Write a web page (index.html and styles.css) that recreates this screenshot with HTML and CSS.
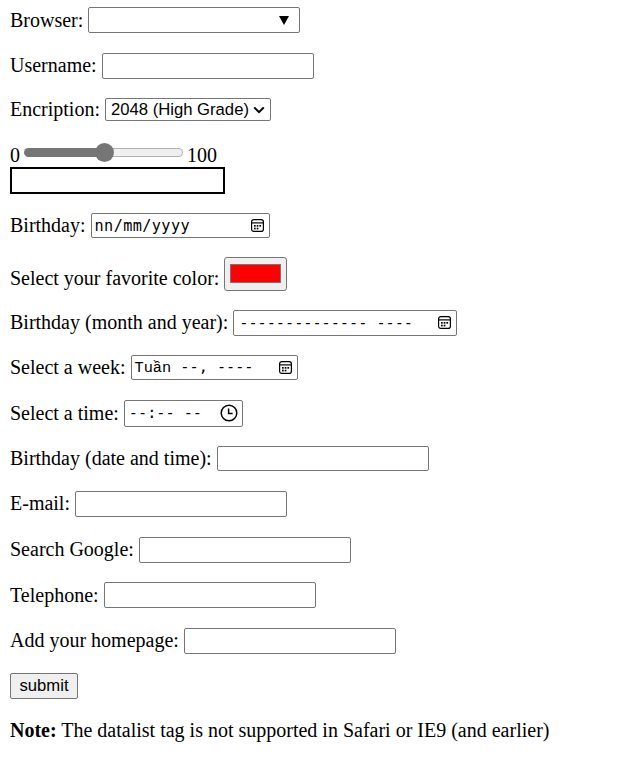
FILE: index.html
```html
<!DOCTYPE html>
<html lang="vi">
<head>
<meta charset="utf-8">
<title>HTML5 input types</title>
<link rel="stylesheet" href="styles.css">
</head>
<body>
<form class="form" action="#">
  <div class="row">
    <label for="browser">Browser:</label>
    <span class="field combo">
      <input id="browser" class="bare" type="text" aria-label="Browser">
      <svg class="caret" width="10" height="9" viewBox="0 0 10 9"><path d="M0 0H10L5 9Z" fill="#000"/></svg>
    </span>
  </div>

  <div class="row">
    <label for="username">Username:</label>
    <input id="username" class="text" type="text">
  </div>

  <div class="row row--select">
    <label>Encription:</label>
    <span class="field select">
      <span class="select-value">2048 (High Grade)</span>
      <svg width="12" height="8" viewBox="0 0 12 8"><path d="M1.2 1.4L6 6.2l4.8-4.8" fill="none" stroke="#000" stroke-width="2"/></svg>
    </span>
  </div>

  <div class="range-group">
    <div class="slider-line">
      <span class="num">0</span>
      <span class="range">
        <span class="range-fill"></span>
        <span class="range-rest"></span>
        <span class="range-thumb"></span>
      </span>
      <span class="num">100</span>
    </div>
    <output class="out"></output>
  </div>

  <div class="row row--short">
    <label>Birthday:</label>
    <span class="field mono date">
      <span>nn/mm/yyyy</span>
      <svg class="ico" width="15" height="15" viewBox="0 0 15 15"><rect x="1.6" y="1.6" width="11.8" height="11.8" rx="2.2" fill="none" stroke="#000" stroke-width="1.2"/><path d="M1.6 4.9H13.4" stroke="#000" stroke-width="1.2"/><g fill="#000"><rect x="4" y="7" width="1.7" height="1.7"/><rect x="6.7" y="7" width="1.7" height="1.7"/><rect x="9.4" y="7" width="1.7" height="1.7"/><rect x="4" y="9.7" width="1.7" height="1.7"/><rect x="6.7" y="9.7" width="1.7" height="1.7"/></g></svg>
    </span>
  </div>

  <div class="row row--color">
    <label class="color-label">Select your favorite color:</label>
    <span class="color-btn"><span class="swatch"></span></span>
  </div>

  <div class="row">
    <label>Birthday (month and year):</label>
    <span class="field mono month">
      <span>-------------- ----</span>
      <svg class="ico" width="15" height="15" viewBox="0 0 15 15"><rect x="1.6" y="1.6" width="11.8" height="11.8" rx="2.2" fill="none" stroke="#000" stroke-width="1.2"/><path d="M1.6 4.9H13.4" stroke="#000" stroke-width="1.2"/><g fill="#000"><rect x="4" y="7" width="1.7" height="1.7"/><rect x="6.7" y="7" width="1.7" height="1.7"/><rect x="9.4" y="7" width="1.7" height="1.7"/><rect x="4" y="9.7" width="1.7" height="1.7"/><rect x="6.7" y="9.7" width="1.7" height="1.7"/></g></svg>
    </span>
  </div>

  <div class="row row--short">
    <label>Select a week:</label>
    <span class="field mono week">
      <span><span class="vi">Tuần</span> --, ----</span>
      <svg class="ico" width="15" height="15" viewBox="0 0 15 15"><rect x="1.6" y="1.6" width="11.8" height="11.8" rx="2.2" fill="none" stroke="#000" stroke-width="1.2"/><path d="M1.6 4.9H13.4" stroke="#000" stroke-width="1.2"/><g fill="#000"><rect x="4" y="7" width="1.7" height="1.7"/><rect x="6.7" y="7" width="1.7" height="1.7"/><rect x="9.4" y="7" width="1.7" height="1.7"/><rect x="4" y="9.7" width="1.7" height="1.7"/><rect x="6.7" y="9.7" width="1.7" height="1.7"/></g></svg>
    </span>
  </div>

  <div class="row row--time">
    <label>Select a time:</label>
    <span class="field mono time">
      <span>--:-- --</span>
      <svg class="ico" width="18" height="18" viewBox="0 0 18 18"><circle cx="9" cy="9" r="7.8" fill="none" stroke="#000" stroke-width="1.5"/><path d="M8.6 4.6V9.4H12.6" fill="none" stroke="#000" stroke-width="1.5"/></svg>
    </span>
  </div>

  <div class="row row--short">
    <label for="bdaytime">Birthday (date and time):</label>
    <input id="bdaytime" class="text text--short" type="text">
  </div>

  <div class="row">
    <label for="email">E-mail:</label>
    <input id="email" class="text" type="email">
  </div>

  <div class="row">
    <label for="search">Search Google:</label>
    <input id="search" class="text" type="search">
  </div>

  <div class="row">
    <label for="tel">Telephone:</label>
    <input id="tel" class="text" type="tel">
  </div>

  <div class="row">
    <label for="homepage">Add your homepage:</label>
    <input id="homepage" class="text" type="url">
  </div>

  <div class="row">
    <button class="btn" type="submit">submit</button>
  </div>

  <p class="note"><b>Note:</b> The datalist tag is not supported in Safari or IE9 (and earlier)</p>
</form>
</body>
</html>
```

FILE: styles.css
```css
html {
  background: #fff;
}

body {
  margin: 0 10px;
  font-family: "Liberation Serif", "Times New Roman", serif;
  font-size: 20px;
  color: #000;
}

.form {
  display: flex;
  flex-direction: column;
  gap: 19.6px;
  padding-top: 7px;
}

.row {
  display: flex;
  align-items: center;
  gap: 5px;
  height: 26px;
}

.row--select { height: 23px; }
.row--short { height: 25px; }
.row--time { height: 27px; }
.row--color { height: 32px; }

label {
  line-height: 23px;
  white-space: nowrap;
}

.color-label {
  padding-top: 10px;
}

.field {
  box-sizing: border-box;
  display: inline-flex;
  align-items: center;
  justify-content: space-between;
  flex: none;
  border: 1px solid #767676;
  border-radius: 2px;
  background: #fff;
}

.text {
  box-sizing: border-box;
  flex: none;
  width: 212px;
  height: 26px;
  margin: 0;
  padding: 1px 2px;
  border: 1px solid #767676;
  border-radius: 2px;
  background: #fff;
  font: 16.67px "Liberation Sans", Arial, sans-serif;
  -webkit-appearance: none;
  appearance: none;
}

.text--short {
  height: 25px;
}

.combo {
  width: 212px;
  height: 26px;
  padding: 0 10px 0 2px;
}

.bare {
  flex: 1;
  min-width: 0;
  height: 100%;
  margin: 0;
  padding: 0;
  border: 0;
  outline: 0;
  background: transparent;
  font: 16.67px "Liberation Sans", Arial, sans-serif;
}

.caret {
  flex: none;
}

.select {
  width: 166px;
  height: 23px;
  padding: 0 5px 0 5px;
  font: 16.67px "Liberation Sans", Arial, sans-serif;
  white-space: nowrap;
}

.mono {
  font: 15.2px "DejaVu Sans Mono", monospace;
  white-space: pre;
}

.vi {
  font: 15.3px "Liberation Mono", "DejaVu Sans Mono", monospace;
}

.ico {
  flex: none;
}

.date {
  width: 179px;
  height: 25px;
  padding: 0 4px 0 3px;
  letter-spacing: 0.4px;
}

.month {
  width: 224px;
  height: 26px;
  padding: 0 4px 0 5px;
}

.week {
  width: 167px;
  height: 25px;
  padding: 0 4px 0 3px;
}

.time {
  width: 119px;
  height: 27px;
  padding: 0 4px 0 4px;
}

/* slider + output */
.range-group {
  display: flex;
  flex-direction: column;
}

.slider-line {
  display: flex;
  align-items: flex-end;
  height: 26px;
}

.num {
  line-height: 23px;
}

.range {
  position: relative;
  display: flex;
  align-items: center;
  width: 159px;
  height: 20px;
  margin: 0 4px 4.75px 4px;
}

.range-fill {
  width: 80px;
  height: 9px;
  background: #767676;
  border-radius: 5px 0 0 5px;
}

.range-rest {
  box-sizing: border-box;
  flex: 1;
  height: 9px;
  background: #efefef;
  border: 1px solid #b2b2b2;
  border-left: 0;
  border-radius: 0 5px 5px 0;
}

.range-thumb {
  position: absolute;
  left: 70.5px;
  top: 0.5px;
  width: 19px;
  height: 19px;
  border-radius: 50%;
  background: #767676;
}

.out {
  display: block;
  box-sizing: border-box;
  width: 215px;
  height: 27px;
  border: 2px solid #000;
}

/* color picker */
.color-btn {
  box-sizing: border-box;
  display: inline-flex;
  align-items: center;
  justify-content: center;
  flex: none;
  width: 63px;
  height: 34px;
  background: #efefef;
  border: 1px solid #767676;
  border-radius: 3px;
}

.swatch {
  box-sizing: border-box;
  width: 51px;
  height: 19px;
  background: #ff0000;
  border: 1px solid #777;
}

.btn {
  box-sizing: border-box;
  width: 68px;
  height: 26px;
  margin: 0;
  padding: 0;
  background: #efefef;
  border: 1px solid #767676;
  border-radius: 2px;
  font: 16.67px "Liberation Sans", Arial, sans-serif;
  color: #000;
}

.note {
  margin: 0;
  line-height: 23px;
}
```
